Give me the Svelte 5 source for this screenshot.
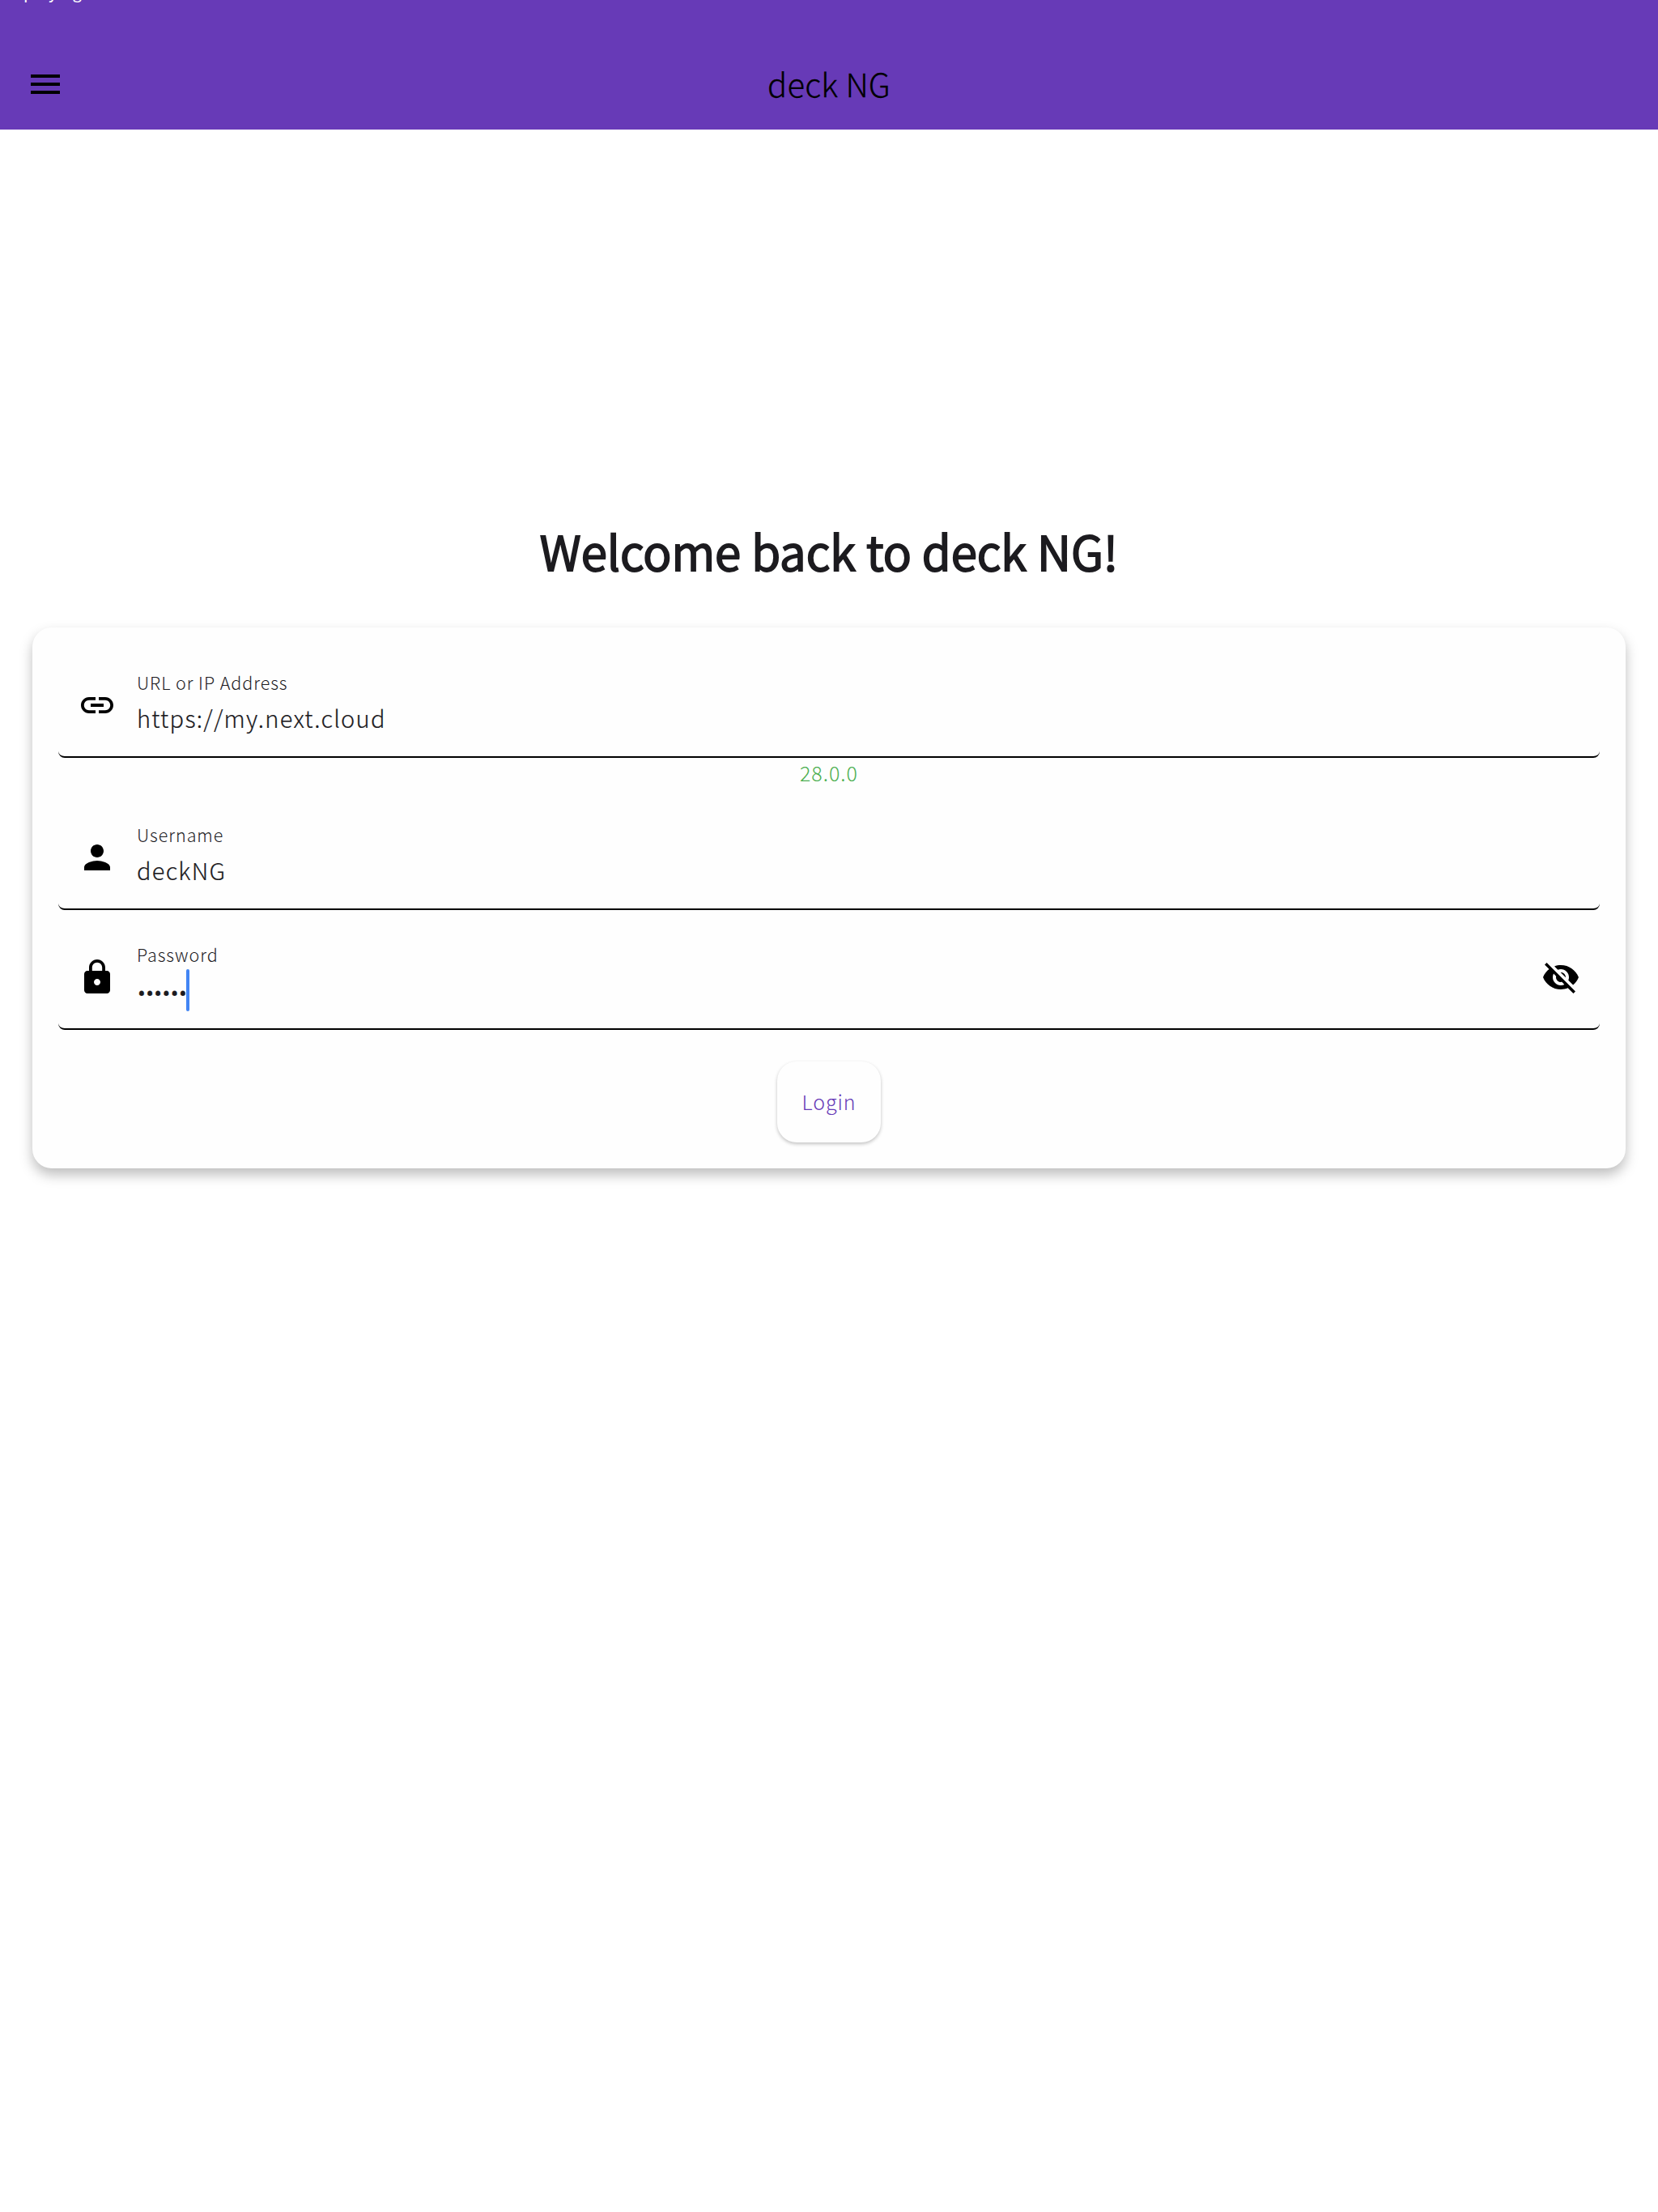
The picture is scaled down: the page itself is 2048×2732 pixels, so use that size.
<script>
  const icons = {
    link: 'M3.9 12c0-1.71 1.39-3.1 3.1-3.1h4V7H7c-2.76 0-5 2.24-5 5s2.24 5 5 5h4v-1.9H7c-1.71 0-3.1-1.39-3.1-3.1zM8 13h8v-2H8v2zm9-6h-4v1.9h4c1.71 0 3.1 1.39 3.1 3.1s-1.39 3.1-3.1 3.1h-4V17h4c2.76 0 5-2.24 5-5s-2.24-5-5-5z',
    person: 'M12 12c2.21 0 4-1.79 4-4s-1.79-4-4-4-4 1.79-4 4 1.79 4 4 4zm0 2c-2.67 0-8 1.34-8 4v2h16v-2c0-2.66-5.33-4-8-4z',
    lock: 'M18 8h-1V6c0-2.76-2.24-5-5-5S7 3.24 7 6v2H6c-1.1 0-2 .9-2 2v10c0 1.1.9 2 2 2h12c1.1 0 2-.9 2-2V10c0-1.1-.9-2-2-2zm-6 9c-1.1 0-2-.9-2-2s.9-2 2-2 2 .9 2 2-.9 2-2 2zm3.1-9H8.9V6c0-1.71 1.39-3.1 3.1-3.1 1.71 0 3.1 1.39 3.1 3.1v2z',
    eyeOff: 'M12 7c2.76 0 5 2.24 5 5 0 .65-.13 1.26-.36 1.83l2.92 2.92c1.51-1.26 2.7-2.89 3.43-4.75-1.73-4.39-6-7.5-11-7.5-1.4 0-2.74.25-3.98.7l2.16 2.16C10.74 7.13 11.35 7 12 7zM2 4.27l2.28 2.28.46.46C3.08 8.3 1.78 10.02 1 12c1.73 4.39 6 7.5 11 7.5 1.55 0 3.03-.3 4.38-.84l.42.42L19.73 22 21 20.73 3.27 3 2 4.27zM7.53 9.8l1.55 1.55c-.05.21-.08.43-.08.65 0 1.66 1.34 3 3 3 .22 0 .44-.03.65-.08l1.55 1.55c-.67.33-1.41.53-2.2.53-2.76 0-5-2.24-5-5 0-.79.2-1.53.53-2.2zm4.31-.78l3.15 3.15.02-.16c0-1.66-1.34-3-3-3l-.17.01z'
  };
</script>

{#snippet icon(path)}
  <svg class="icon" viewBox="0 0 24 24" aria-hidden="true"><path d={path} /></svg>
{/snippet}

{#snippet field(path, label, value)}
  <div class="field">
    {@render icon(path)}
    <div class="text">
      <div class="label">{label}</div>
      <div class="value">{value}</div>
    </div>
  </div>
{/snippet}

<div class="page">
  <header>
    <span class="status">Displaying boards</span>
    <svg class="menu" viewBox="0 0 36 24" aria-label="Menu"><path d="M0 0h36v4H0zM0 10h36v4H0zM0 20h36v4H0z" /></svg>
    <span class="title">deck NG</span>
  </header>

  <main>
    <h1>Welcome back to deck NG!</h1>

    <section class="card">
      {@render field(icons.link, 'URL or IP Address', 'https://my.next.cloud')}
      <div class="version">28.0.0</div>
      {@render field(icons.person, 'Username', 'deckNG')}
      <div class="field password">
        {@render icon(icons.lock)}
        <div class="text">
          <div class="label">Password</div>
          <div class="value secret"><span class="dots">••••••</span><i class="caret"></i></div>
        </div>
        {@render icon(icons.eyeOff)}
      </div>
      <button class="login">Login</button>
    </section>
  </main>
</div>

<style>
  :global(body) {
    background: #fff;
  }
  .page {
    min-height: 2732px;
    font-family: 'Noto Sans CJK SC', 'Noto Sans', sans-serif;
    font-weight: 300;
    color: #1c1b1f;
    white-space: nowrap;
  }
  header {
    position: relative;
    box-sizing: border-box;
    height: 160px;
    padding: 48px 38px 0;
    display: grid;
    grid-template-columns: 36px 1fr 36px;
    align-items: center;
    overflow: hidden;
    background: #673ab7;
    color: #000;
  }
  .status {
    position: absolute;
    left: -1px;
    top: -25px;
    font-size: 20px;
    line-height: 30px;
    letter-spacing: 0.5px;
    font-weight: 400;
    color: #fff;
  }
  .menu {
    width: 36px;
    height: 24px;
  }
  .title {
    text-align: center;
    font-size: 40px;
    line-height: 60px;
    letter-spacing: 0.2px;
    padding-bottom: 2px;
    -webkit-text-stroke: 0.3px #000;
  }
  main {
    padding: 0 40px;
  }
  h1 {
    margin: 0;
    padding: 480px 0 55px;
    font-size: 58.4px;
    line-height: 80px;
    font-weight: 350;
    text-align: center;
    -webkit-text-stroke: 2px #1c1b1f;
  }
  .card {
    box-sizing: border-box;
    height: 668px;
    padding: 31px 32px 32px;
    display: flex;
    flex-direction: column;
    border-radius: 24px;
    background: #fefefe;
    box-shadow: 0 8px 16px rgba(0, 0, 0, 0.26);
  }
  .field {
    box-sizing: border-box;
    height: 130px;
    display: flex;
    align-items: center;
    gap: 24px;
    padding: 2px 24px 0;
    border-bottom: 2px solid #000;
    border-radius: 0 0 8px 8px;
  }
  .icon {
    flex: none;
    width: 48px;
    height: 48px;
  }
  .text {
    flex: 1;
    align-self: flex-start;
    padding: 21px 0 0 1px;
  }
  .label {
    margin-bottom: 9px;
    font-size: 21.5px;
    line-height: 28px;
    letter-spacing: 0.95px;
    color: #1c1b1f;
  }
  .value {
    height: 40px;
    font-size: 29px;
    line-height: 40px;
    letter-spacing: 1.25px;
    -webkit-text-stroke: 0.2px #1c1b1f;
  }
  .secret {
    display: flex;
    align-items: center;
  }
  .dots {
    padding: 11px 0 0 1px;
    font-family: Roboto, sans-serif;
    font-size: 29px;
    font-weight: 400;
    letter-spacing: 0.4px;
  }
  .caret {
    width: 4px;
    height: 52px;
    margin: 2px 0 0 -1px;
    border-radius: 2px;
    background: #4285f4;
  }
  .version {
    margin-bottom: 22px;
    font-size: 25px;
    line-height: 36px;
    letter-spacing: 1px;
    text-align: center;
    color: #4caf50;
  }
  .password {
    margin-top: 18px;
  }
  .login {
    align-self: center;
    width: 128px;
    height: 100px;
    margin-top: 39px;
    padding: 0 0 2px;
    border: 0;
    border-radius: 24px;
    background: #fefefe;
    box-shadow: 0 2px 4px rgba(0, 0, 0, 0.24);
    font: inherit;
    font-size: 25px;
    letter-spacing: 0.9px;
    color: #673ab7;
  }
</style>
